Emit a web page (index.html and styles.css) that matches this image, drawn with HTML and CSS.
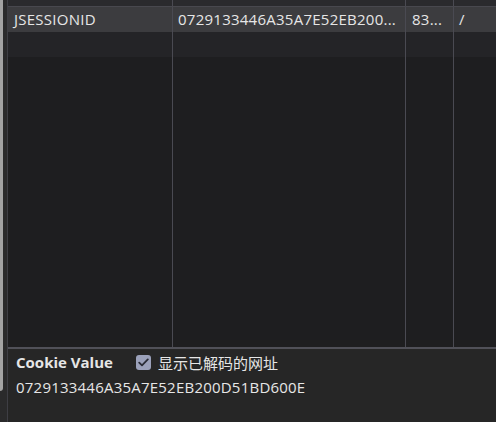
FILE: index.html
```html
<!DOCTYPE html>
<html>
<head>
<meta charset="utf-8">
<link rel="stylesheet" href="styles.css">
</head>
<body>
<div class="app">
  <div class="gutter"><div class="thumb"></div></div>
  <div class="main">
    <div class="grid">
      <div class="head-row">
        <div class="c c1"></div><div class="c c2"></div><div class="c c3"></div><div class="c c4"></div>
      </div>
      <div class="row sel">
        <div class="c c1">JSESSIONID</div>
        <div class="c c2">0729133446A35A7E52EB200...</div>
        <div class="c c3">83...</div>
        <div class="c c4">/</div>
      </div>
      <div class="row alt">
        <div class="c c1"></div><div class="c c2"></div><div class="c c3"></div><div class="c c4"></div>
      </div>
      <div class="row fill">
        <div class="c c1"></div><div class="c c2"></div><div class="c c3"></div><div class="c c4"></div>
      </div>
    </div>
    <div class="panel">
      <div class="panel-head">
        <span class="title">Cookie Value</span>
        <label class="check">
          <span class="box"><svg width="11" height="9" viewBox="0 0 11 9"><path d="M1.2 4.6 L4 7.3 L9.8 1.4" fill="none" stroke="#2a2c36" stroke-width="1.8" stroke-linecap="round" stroke-linejoin="round"/></svg></span>
          <span class="label">显示已解码的网址</span>
        </label>
      </div>
      <div class="value">0729133446A35A7E52EB200D51BD600E</div>
    </div>
  </div>
</div>
</body>
</html>
```
FILE: styles.css
```css
html, body {
  margin: 0;
  padding: 0;
  height: 100%;
  background: #1e1e20;
  font-family: "Open Sans", "Noto Sans CJK SC", sans-serif;
  font-size: 15px;
  color: #e6e6e6;
  overflow: hidden;
}
.app {
  display: flex;
  height: 422px;
}
.gutter {
  width: 7px;
  background: #2a2a2b;
  border-right: 1px solid #3e3e44;
  flex: none;
}
.thumb {
  width: 3px;
  height: 391px;
  background: #a3a3a3;
  border-bottom-right-radius: 3px;
}
.main {
  flex: 1;
  display: flex;
  flex-direction: column;
  min-width: 0;
}
.grid {
  flex: 1;
  display: flex;
  flex-direction: column;
}
.head-row, .row {
  display: flex;
}
.head-row {
  height: 6px;
  background: #2a2a2d;
  border-bottom: 1px solid #48484e;
}
.row {
  height: 25px;
  align-items: stretch;
}
.row.sel { background: #3c3c3f; }
.row.alt { background: #242427; }
.row.fill { flex: 1; height: auto; background: #1e1e20; }
.c {
  box-sizing: border-box;
  border-right: 1px solid #4a4a52;
  white-space: nowrap;
  overflow: hidden;
  display: flex;
  align-items: center;
  line-height: 25px;
  letter-spacing: 0.25px;
}
.c1 { width: 165px; padding-left: 6px; }
.c2 { width: 233px; padding-left: 5px; }
.c3 { width: 48px; padding-left: 6px; }
.c4 { flex: 1; padding-left: 5px; border-right: none; }
.panel {
  height: 73px;
  border-top: 2px solid #505058;
  background: #262626;
  padding: 0 0 0 8px;
}
.panel-head {
  display: flex;
  align-items: center;
  height: 26px;
}
.title {
  font-weight: 700;
  width: 120px;
}
.check {
  display: flex;
  align-items: center;
}
.box {
  width: 15px;
  height: 15px;
  border-radius: 3px;
  background: #9ba1ba;
  display: flex;
  align-items: center;
  justify-content: center;
  margin-right: 7px;
}
.label {
  font-family: "Noto Sans CJK SC", sans-serif;
}
.value {
  line-height: 24px;
  letter-spacing: 0.22px;
}
```
